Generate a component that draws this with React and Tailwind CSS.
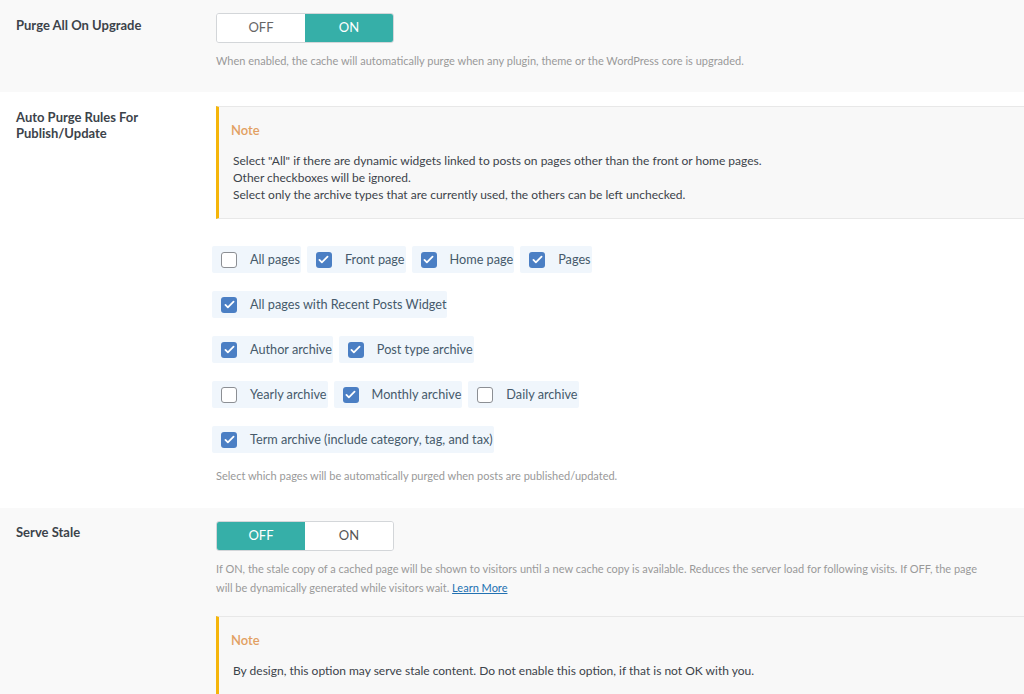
import React from 'react';

const font = { fontFamily: 'Lato, "Open Sans", sans-serif' };

const Toggle = ({ on }) => (
    <div className="flex w-[178px] h-[30px] rounded-[3px] overflow-hidden border border-[#d3d6d9] text-[13px]">
        <div className={`flex-1 flex items-center justify-center ${on ? 'bg-white text-[#666]' : 'bg-[#36afa8] text-white'}`}>OFF</div>
        <div className={`flex-1 flex items-center justify-center ${on ? 'bg-[#36afa8] text-white' : 'bg-white text-[#555]'}`}>ON</div>
    </div>
);

const Check = ({ label, checked }) => (
    <label className="flex items-center h-[27px] bg-[#f0f6fc] pl-[9px] pr-[1px] rounded-[2px]">
        {checked ? (
            <span className="w-4 h-4 rounded-[3px] bg-[#4b7fc4] flex items-center justify-center">
                <svg viewBox="0 0 16 16" className="w-[13px] h-[13px]" fill="none" stroke="white" strokeWidth="2.2" strokeLinecap="round" strokeLinejoin="round">
                    <path d="M3 8.5l3 3 7-7" />
                </svg>
            </span>
        ) : (
            <span className="w-4 h-4 rounded-[3px] bg-white border border-[#8c8f94]" />
        )}
        <span className="ml-[13px] text-[12.7px] text-[#465a6b]">{label}</span>
    </label>
);

const Note = ({ children }) => (
    <div className="border-l-[3px] border-l-[#f5b50a] border-y border-y-[#e8e8e8] bg-[#f8f8f8] pl-[14px] pr-4">
        {children}
    </div>
);

const checkRows = [
    [['All pages', false], ['Front page', true], ['Home page', true], ['Pages', true]],
    [['All pages with Recent Posts Widget', true]],
    [['Author archive', true], ['Post type archive', true]],
    [['Yearly archive', false], ['Monthly archive', true], ['Daily archive', false]],
    [['Term archive (include category, tag, and tax)', true]],
];

export default function App() {
    return (
        <div className="w-[1024px] h-[694px] overflow-hidden bg-white" style={font}>
            {/* Purge All On Upgrade */}
            <div className="flex bg-[#f9f9f9] h-[92px] pt-[13px]">
                <div className="w-[216px] pl-4 pt-[3px] text-[13px] font-bold text-[#3c434a]">Purge All On Upgrade</div>
                <div className="flex-1">
                    <Toggle on />
                    <p className="mt-[8px] text-[11px] leading-[19px] text-[#999]">When enabled, the cache will automatically purge when any plugin, theme or the WordPress core is upgraded.</p>
                </div>
            </div>

            {/* Auto Purge Rules */}
            <div className="flex bg-white h-[416px] pt-[14px]">
                <div className="w-[216px] pl-4 pt-[3px] text-[13px] leading-[16px] font-bold text-[#3c434a]">Auto Purge Rules For<br />Publish/Update</div>
                <div className="flex-1">
                    <Note>
                        <div className="pt-[14px] pb-[15px]">
                            <div className="-ml-[2px] text-[13px] leading-[18px] font-semibold text-[#e2a063]">Note</div>
                            <div className="mt-[13px] text-[12px] leading-[17px] text-[#3c434a]">
                                <p>Select "All" if there are dynamic widgets linked to posts on pages other than the front or home pages.</p>
                                <p>Other checkboxes will be ignored.</p>
                                <p>Select only the archive types that are currently used, the others can be left unchecked.</p>
                            </div>
                        </div>
                    </Note>
                    <div className="mt-[27px] -ml-1 flex flex-col gap-[18px]">
                        {checkRows.map((row, i) => (
                            <div key={i} className="flex gap-[6px]">
                                {row.map(([label, checked]) => (
                                    <Check key={label} label={label} checked={checked} />
                                ))}
                            </div>
                        ))}
                    </div>
                    <p className="mt-[13px] text-[11px] leading-[19px] text-[#999]">Select which pages will be automatically purged when posts are published/updated.</p>
                </div>
            </div>

            {/* Serve Stale */}
            <div className="flex bg-[#f9f9f9] h-[186px] pt-[13px]">
                <div className="w-[216px] pl-4 pt-[2px] text-[13px] font-bold text-[#3c434a]">Serve Stale</div>
                <div className="flex-1">
                    <Toggle on={false} />
                    <p className="mt-[8px] text-[11px] leading-[19px] text-[#999] pr-10">
                        If ON, the stale copy of a cached page will be shown to visitors until a new cache copy is available. Reduces the server load for following visits. If OFF, the page<br />
                        will be dynamically generated while visitors wait. <a className="text-[#2271b1] underline">Learn More</a>
                    </p>
                    <div className="mt-[19px]">
                        <Note>
                            <div className="pt-[14px] pb-[20px]">
                                <div className="-ml-[2px] text-[13px] leading-[18px] font-semibold text-[#e2a063]">Note</div>
                                <div className="mt-[13px] text-[12px] leading-[17px] text-[#3c434a]">
                                    <p>By design, this option may serve stale content. Do not enable this option, if that is not OK with you.</p>
                                </div>
                            </div>
                        </Note>
                    </div>
                </div>
            </div>
        </div>
    );
}
